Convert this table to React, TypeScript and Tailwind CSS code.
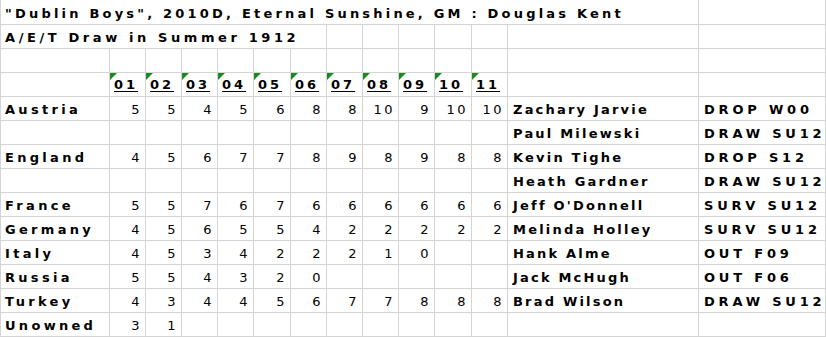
import React from "react";

type Row = {
  country: string;
  values: (number | null)[];
  player: string;
  status: string;
};

const rows: Row[] = [
  { country: "Austria", values: [5, 5, 4, 5, 6, 8, 8, 10, 9, 10, 10], player: "Zachary Jarvie", status: "DROP W00" },
  { country: "", values: [], player: "Paul Milewski", status: "DRAW SU12" },
  { country: "England", values: [4, 5, 6, 7, 7, 8, 9, 8, 9, 8, 8], player: "Kevin Tighe", status: "DROP S12" },
  { country: "", values: [], player: "Heath Gardner", status: "DRAW SU12" },
  { country: "France", values: [5, 5, 7, 6, 7, 6, 6, 6, 6, 6, 6], player: "Jeff O'Donnell", status: "SURV SU12" },
  { country: "Germany", values: [4, 5, 6, 5, 5, 4, 2, 2, 2, 2, 2], player: "Melinda Holley", status: "SURV SU12" },
  { country: "Italy", values: [4, 5, 3, 4, 2, 2, 2, 1, 0], player: "Hank Alme", status: "OUT F09" },
  { country: "Russia", values: [5, 5, 4, 3, 2, 0], player: "Jack McHugh", status: "OUT F06" },
  { country: "Turkey", values: [4, 3, 4, 4, 5, 6, 7, 7, 8, 8, 8], player: "Brad Wilson", status: "DRAW SU12" },
  { country: "Unowned", values: [3, 1], player: "", status: "" },
];

const headers = ["01", "02", "03", "04", "05", "06", "07", "08", "09", "10", "11"];

const cell = "border-r border-b border-[#d4d4d4] flex items-end pb-[2px] leading-4 whitespace-nowrap overflow-visible";

export default function App() {
  return (
    <div className="w-[826px] h-[337px] overflow-hidden bg-white text-black font-['DejaVu_Sans',sans-serif] text-[13px]">
      <div className="grid grid-cols-[109px_36px_36px_36px_36px_37px_36px_36px_36px_36px_37px_36px_191px_1fr] grid-rows-[25px_repeat(13,24px)] border-l border-[#d4d4d4]">
        {/* Row 1 */}
        <div className={`${cell} col-span-13 pl-[4px] pb-[1px] font-bold tracking-[3.2px]`}>
          "Dublin Boys", 2010D, Eternal Sunshine, GM : Douglas Kent
        </div>
        <div className={cell}></div>

        {/* Row 2 */}
        <div className={`${cell} col-span-7 pl-[4px] font-bold tracking-[3.6px]`}>A/E/T Draw in Summer 1912</div>
        {Array.from({ length: 7 }).map((_, i) => (
          <div key={`r2-${i}`} className={cell}></div>
        ))}

        {/* Row 3 */}
        {Array.from({ length: 14 }).map((_, i) => (
          <div key={`r3-${i}`} className={cell}></div>
        ))}

        {/* Row 4 headers */}
        <div className={cell}></div>
        {headers.map((h) => (
          <div key={h} className={`${cell} relative pl-[4px] pb-[3px]`}>
            <span className="absolute left-0 top-0 w-0 h-0 border-t-[7px] border-r-[7px] border-t-[#1e8a1e] border-r-transparent"></span>
            <span className="font-bold tracking-[3px] underline decoration-1 underline-offset-[2px]">{h}</span>
          </div>
        ))}
        <div className={cell}></div>
        <div className={cell}></div>

        {/* Data rows */}
        {rows.map((r, ri) => (
          <React.Fragment key={ri}>
            <div className={`${cell} pl-[4px] font-bold tracking-[3.3px]`}>{r.country}</div>
            {Array.from({ length: 11 }).map((_, ci) => {
              const v = r.values[ci];
              return (
                <div key={ci} className={`${cell} justify-end pr-[3px] tracking-[2.5px]`}>
                  {v !== undefined && v !== null ? v : ""}
                </div>
              );
            })}
            <div className={`${cell} pl-[5px] font-bold tracking-[2.2px]`}>{r.player}</div>
            <div className={`${cell} pl-[5px] font-bold tracking-[3.8px]`}>{r.status}</div>
          </React.Fragment>
        ))}
      </div>
    </div>
  );
}
